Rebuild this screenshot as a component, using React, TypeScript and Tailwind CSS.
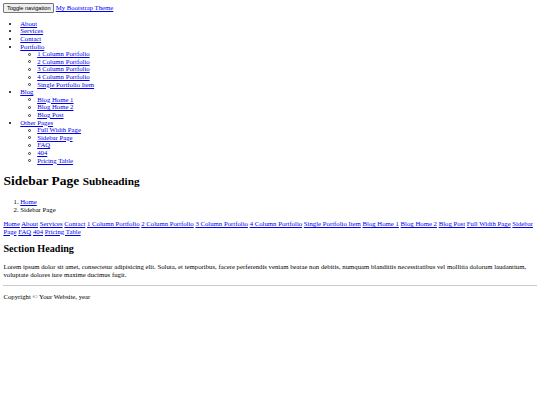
import React from "react";

const A = ({ children }: { children: React.ReactNode }) => (
  <a href="#" className="text-[#0000ee] underline">
    {children}
  </a>
);

const nav: { label: string; sub?: string[] }[] = [
  { label: "About" },
  { label: "Services" },
  { label: "Contact" },
  {
    label: "Portfolio",
    sub: [
      "1 Column Portfolio",
      "2 Column Portfolio",
      "3 Column Portfolio",
      "4 Column Portfolio",
      "Single Portfolio Item",
    ],
  },
  { label: "Blog", sub: ["Blog Home 1", "Blog Home 2", "Blog Post"] },
  {
    label: "Other Pages",
    sub: ["Full Width Page", "Sidebar Page", "FAQ", "404", "Pricing Table"],
  },
];

const side = [
  "Home",
  "About",
  "Services",
  "Contact",
  "1 Column Portfolio",
  "2 Column Portfolio",
  "3 Column Portfolio",
  "4 Column Portfolio",
  "Single Portfolio Item",
  "Blog Home 1",
  "Blog Home 2",
  "Blog Post",
  "Full Width Page",
  "Sidebar Page",
  "FAQ",
  "404",
  "Pricing Table",
];

export default function App() {
  return (
    <div className="bg-white min-h-[405px] w-[540px] overflow-hidden">
      <div className="m-0 p-[3.375px] font-['Liberation_Serif',serif] text-[6.75px] leading-[7.6px] text-black">
        <div className="leading-[8px]">
          <button className="px-[2.5px] py-[0.6px] border-[0.8px] border-[#767676] rounded-[1px] bg-[#efefef] font-['Liberation_Sans',sans-serif] text-[5.625px] leading-[6.5px] text-black">
            Toggle navigation
          </button>{" "}
          <A>My Bootstrap Theme</A>
        </div>
        <ul className="list-disc my-[6.75px] pl-[16.875px]">
          {nav.map((n) => (
            <li key={n.label}>
              <A>{n.label}</A>
              {n.sub && (
                <ul className="list-none pl-[16.875px]">
                  {n.sub.map((s) => (
                    <li key={s}>
                      <span className="inline-block align-middle w-[3px] h-[3px] rounded-full border-[0.6px] border-[#333] ml-[-9.5px] mr-[6.5px] mb-[0.5px]" />
                      <A>{s}</A>
                    </li>
                  ))}
                </ul>
              )}
            </li>
          ))}
        </ul>
        <h1 className="text-[13.5px] font-bold my-[9.05px] leading-[15px]">
          Sidebar Page <small className="text-[11.25px]">Subheading</small>
        </h1>
        <ol className="list-decimal my-[6.75px] pl-[16.875px]">
          <li>
            <A>Home</A>
          </li>
          <li>Sidebar Page</li>
        </ol>
        <div>
          {side.map((s, i) => (
            <React.Fragment key={s}>
              <A>{s}</A>
              {i < side.length - 1 ? " " : ""}
            </React.Fragment>
          ))}
        </div>
        <h2 className="text-[10.125px] font-bold my-[8.4px] leading-[10.6px]">
          Section Heading
        </h2>
        <p className="my-[6.75px] leading-[8px]">
          Lorem ipsum dolor sit amet, consectetur adipisicing elit. Soluta, et
          temporibus, facere perferendis veniam beatae non debitis, numquam
          blanditiis necessitatibus vel mollitia dolorum laudantium, voluptate
          dolores iure maxime ducimus fugit.
        </p>
        <hr className="my-[3.375px] h-0 border-0 border-t-[1px] border-[#c9c9c9]" />
        <footer>
          <p className="my-[6.75px]">Copyright © Your Website, year</p>
        </footer>
      </div>
    </div>
  );
}
